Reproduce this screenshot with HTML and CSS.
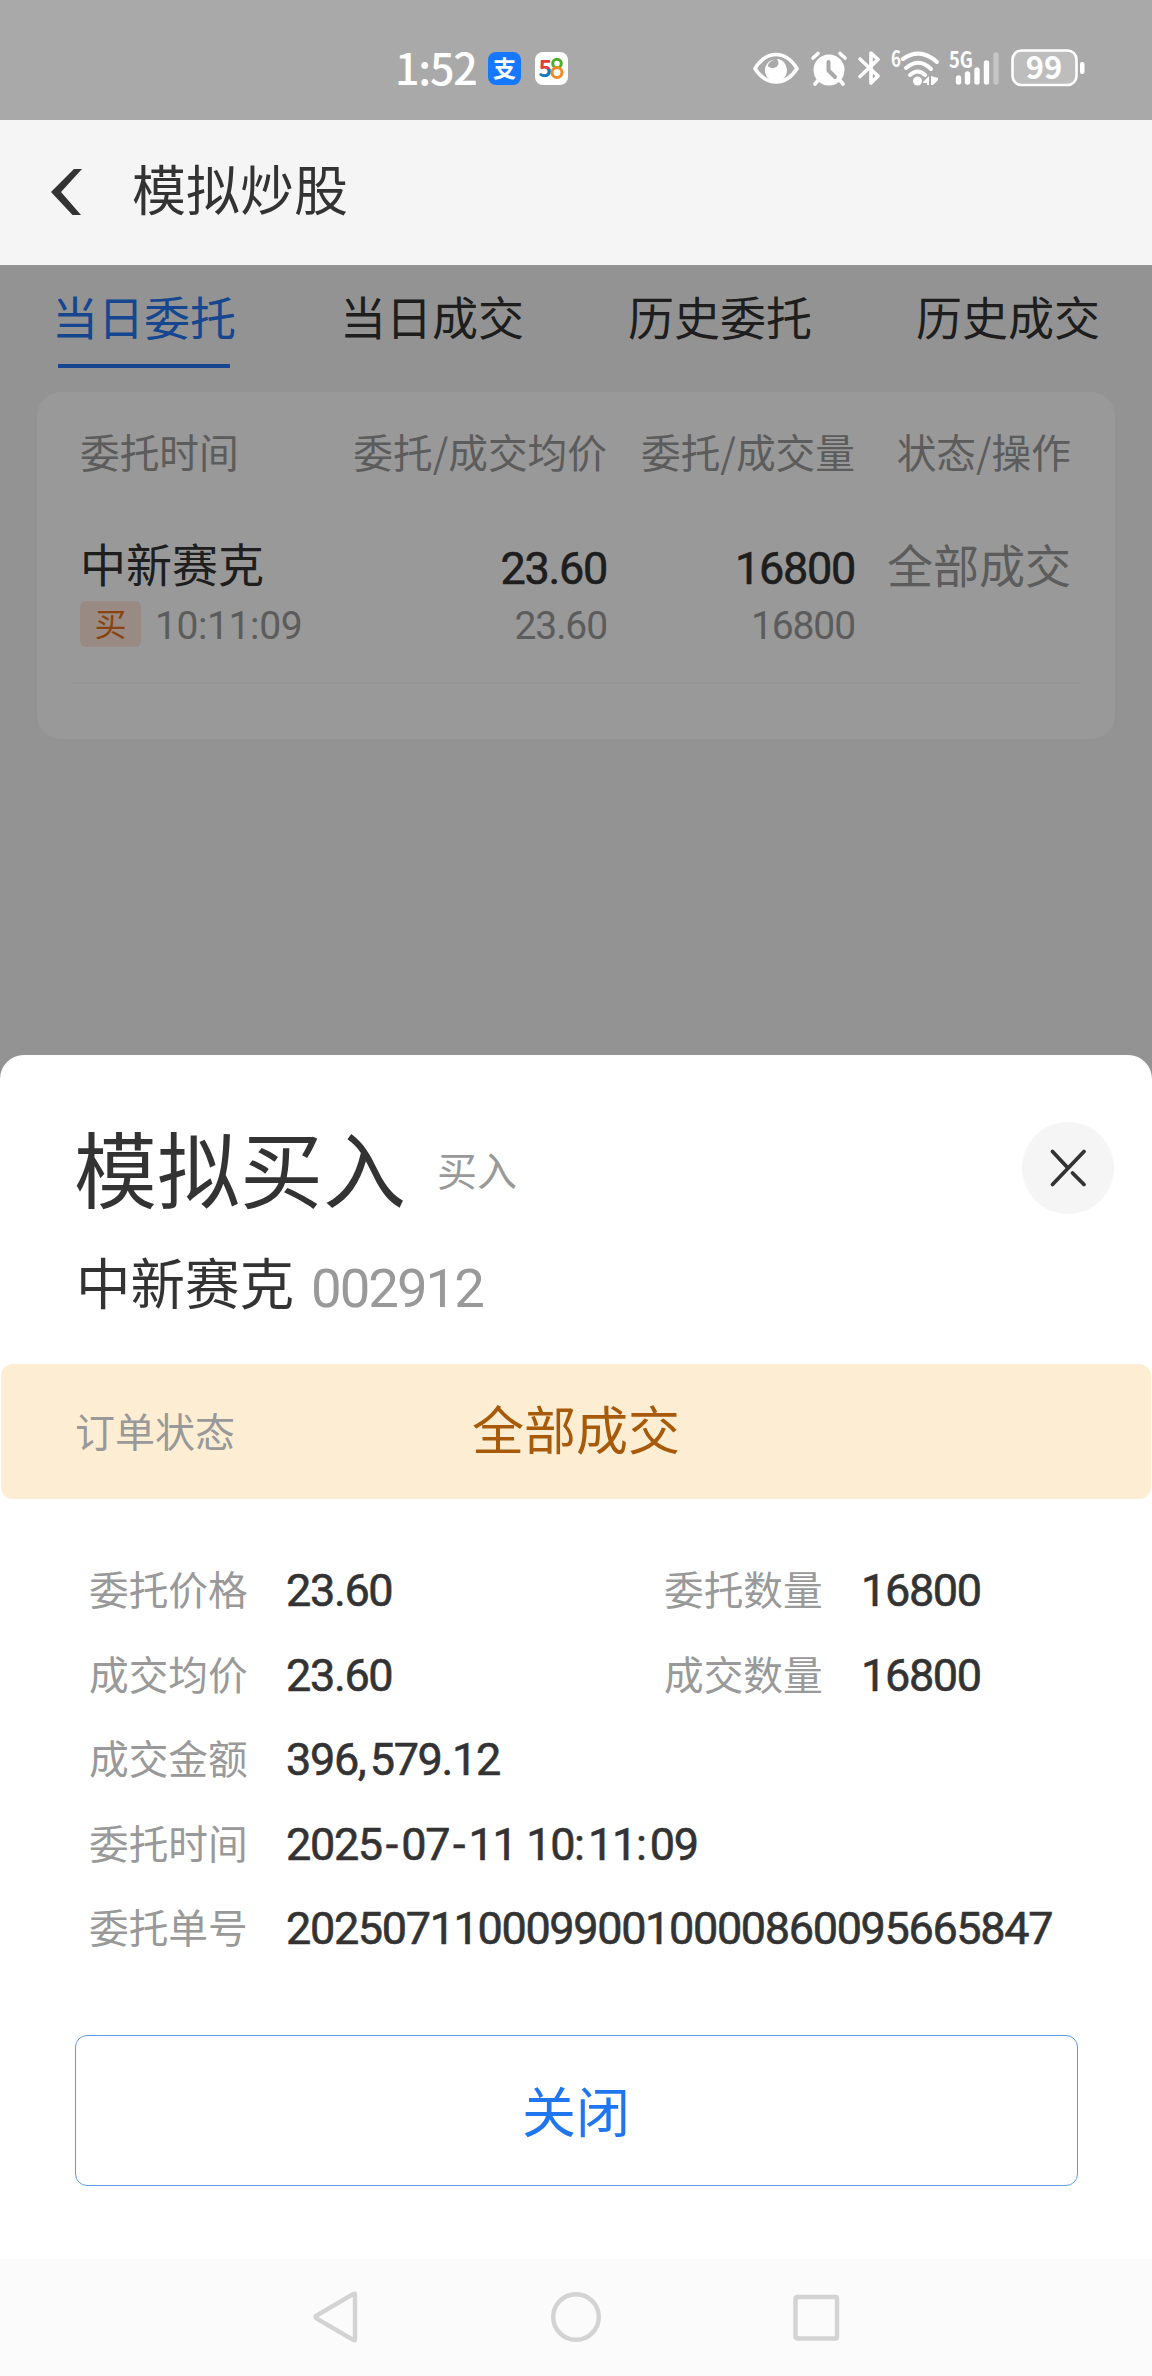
FILE: index.html
```html
<!DOCTYPE html>
<html lang="zh-CN">
  <head>
    <meta charset="UTF-8" />
    <meta name="viewport" content="width=device-width, initial-scale=1.0" />
    <title>模拟炒股</title>
    <link rel="stylesheet" href="styles.css">
  </head>
  <body>
    <div class="status-bar">
      <span class="time">1:52</span>
      <svg class="app-icon" width="33" height="33" viewBox="0 0 33 33">
        <rect width="33" height="33" rx="8" fill="#1677ff" />
        <text x="16.5" y="24.5" text-anchor="middle" font-size="23" font-weight="700" fill="#fff">支</text>
      </svg>
      <svg class="app-icon app-58" width="33" height="33" viewBox="0 0 33 33">
        <defs>
          <linearGradient id="five" x1="0" y1="0" x2="0" y2="1">
            <stop offset="0.55" stop-color="#e03c3c" />
            <stop offset="0.55" stop-color="#1779ba" />
          </linearGradient>
        </defs>
        <rect width="33" height="33" rx="8" fill="#fff" />
        <text x="3.500" y="25" font-size="23" font-weight="700" fill="url(#five)">5</text>
        <circle cx="22" cy="11.500" r="4.300" fill="none" stroke="#4bb02c" stroke-width="3" />
        <circle cx="22" cy="20.500" r="5" fill="none" stroke="#f08a24" stroke-width="3" />
      </svg>
      <div class="status-icons">
        <svg class="eye" width="46" height="33" viewBox="0 0 46 33">
          <path d="M2 16.5C8 7 15 2.500 23 2.500S38 7 44 16.500C38 26 31 30 23 30S8 26 2 16.500Z" fill="none" stroke="#fff" stroke-width="3.600" stroke-linejoin="round" />
          <path d="M22 7.500A11 11 0 1 0 33 14C31 9 28 7 24 7Q27 11 24 14.500Q19 18 14.500 14Q16 9 22 7.500Z" fill="#fff" />
        </svg>
        <svg class="alarm" width="36" height="35" viewBox="0 0 36 35">
          <circle cx="18" cy="19" r="15.500" fill="#fff" />
          <path d="M2 7L7 2.500M34 7L29 2.500M6.500 30L4 33M29.500 30L32 33" stroke="#fff" stroke-width="3.600" stroke-linecap="round" />
          <path d="M17.500 11V19.500L24 26" fill="none" stroke="#a9a9a9" stroke-width="4" stroke-linecap="round" stroke-linejoin="round" />
        </svg>
        <svg class="bluetooth" width="23" height="36" viewBox="0 0 23 36">
          <path d="M2 9L20 26L13 33V3L20 9.500L2 26.500" fill="none" stroke="#fff" stroke-width="3.600" stroke-linecap="round" stroke-linejoin="round" />
        </svg>
        <svg class="wifi" width="50" height="38" viewBox="0 0 50 38">
          <text x="0" y="18" font-size="22" font-weight="700" fill="#fff" textLength="10" lengthAdjust="spacingAndGlyphs">6</text>
          <path d="M12 10Q29 -2 46 13M15 19Q28 8 40 20M19 26Q27 19 34 26" fill="none" stroke="#fff" stroke-width="4" stroke-linecap="round" />
          <circle cx="26.500" cy="32" r="4.500" fill="#fff" />
          <path d="M32 33L38 27V36H36V34H32ZM40 27V36H42L47 31V29Z" fill="#fff" />
        </svg>
        <svg class="signal" width="52" height="38" viewBox="0 0 52 38">
          <text x="0" y="19" font-size="22" font-weight="700" fill="#fff" textLength="24" lengthAdjust="spacingAndGlyphs">5G</text>
          <path d="M9.500 29V33M18.500 25V33M28 21V33M37.500 14V33" stroke="#fff" stroke-width="5.400" stroke-linecap="round" />
          <path d="M47 6V33" stroke="#c5c5c5" stroke-width="5.400" stroke-linecap="round" />
        </svg>
        <svg class="battery" width="74" height="38" viewBox="0 0 74 38">
          <rect x="1.500" y="1.500" width="64" height="34.500" rx="9" fill="#bdbdbd" stroke="#fff" stroke-width="2.600" />
          <rect x="69" y="13" width="4.500" height="12" rx="2" fill="#fff" />
          <text x="33" y="30" text-anchor="middle" font-size="31" font-weight="700" fill="#fff">99</text>
        </svg>
      </div>
    </div>

    <div class="header">
      <svg width="34" height="48" viewBox="0 0 34 48">
        <path d="M24 0H32L11 23L31 46H22.500L1 23Z" fill="#333" />
      </svg>
      <h1>模拟炒股</h1>
    </div>

    <div class="content">
      <ul class="tabs">
        <li class="on">当日委托</li>
        <li>当日成交</li>
        <li>历史委托</li>
        <li>历史成交</li>
      </ul>
      <div class="card">
        <div class="row head">
          <span>委托时间</span>
          <span>委托/成交均价</span>
          <span>委托/成交量</span>
          <span>状态/操作</span>
        </div>
        <div class="row order">
          <div>
            <p class="name">中新赛克</p>
            <p class="deal"><span class="tag">买</span><span class="num clock">10:11:09</span></p>
          </div>
          <div class="num">
            <p class="main">23.60</p>
            <p class="sub">23.60</p>
          </div>
          <div class="num">
            <p class="main">16800</p>
            <p class="sub">16800</p>
          </div>
          <div class="state">全部成交</div>
        </div>
      </div>

      <div class="mask">
        <div class="sheet">
          <div class="sheet-top">
            <h2>模拟买入</h2>
            <span class="side">买入</span>
            <button class="close">
              <svg width="40" height="40" viewBox="0 0 40 40">
                <path d="M4.500 3.500L19 19M24.500 25L36 36.500M36 3.500L4.500 36.500" stroke="#333" stroke-width="3.800" stroke-linecap="round" />
              </svg>
            </button>
          </div>
          <div class="stock">
            <span>中新赛克</span>
            <span class="num code">002912</span>
          </div>
          <div class="banner">
            <span class="label">订单状态</span>
            <span class="result">全部成交</span>
          </div>
          <dl class="details">
            <dt>委托价格</dt>
            <dd class="num">23.60</dd>
            <dt>委托数量</dt>
            <dd class="num">16800</dd>
            <dt>成交均价</dt>
            <dd class="num">23.60</dd>
            <dt>成交数量</dt>
            <dd class="num">16800</dd>
            <dt>成交金额</dt>
            <dd class="num wide">396<b>,</b>579.12</dd>
            <dt>委托时间</dt>
            <dd class="num wide">2025<i>-</i>07<i>-</i>11 10<b>:</b>11<b>:</b>09</dd>
            <dt>委托单号</dt>
            <dd class="num wide">20250711000990010000860095665847</dd>
          </dl>
          <button class="confirm">关闭</button>
        </div>
      </div>
    </div>

    <div class="nav">
      <svg width="50" height="54" viewBox="0 0 50 54">
        <path d="M45 3.500V48.500Q45 50 43.500 49L6.500 27.500Q4.500 26 6.500 24.500L43.500 3Q45 2 45 3.500Z" />
      </svg>
      <svg width="54" height="54" viewBox="0 0 54 54">
        <circle cx="27" cy="26" r="22.800" />
      </svg>
      <svg width="50" height="54" viewBox="0 0 50 54">
        <rect x="3.500" y="6" width="41.500" height="41.500" rx="1.500" />
      </svg>
    </div>
  </body>
</html>
```
FILE: styles.css
```css
* {
  margin: 0;
  padding: 0;
  box-sizing: border-box;
}
body {
  width: 1152px;
  height: 2376px;
  background: #fff;
  color: #333;
  font-family: "Noto Sans CJK SC", sans-serif;
  overflow: hidden;
}
ul {
  list-style: none;
}
button {
  border: none;
  font-family: inherit;
}
svg {
  display: block;
  flex-shrink: 0;
  overflow: visible;
}
.num {
  font-family: Roboto, "Noto Sans CJK SC", sans-serif;
}

/* status bar */
.status-bar {
  display: flex;
  align-items: center;
  height: 120px;
  padding: 16px 67px 0 395px;
  background: #a9a9a9;
}
.time {
  width: 93px;
  color: #fff;
  font-size: 43px;
  font-weight: 500;
  line-height: 60px;
  padding-bottom: 4px;
  letter-spacing: -1.2px;
}
.app-58 {
  margin-left: 14px;
}
.status-icons {
  display: flex;
  align-items: center;
  margin-left: auto;
}
.alarm {
  margin-left: 12px;
}
.bluetooth {
  margin-left: 11px;
}
.wifi {
  margin-left: 10px;
}
.signal {
  margin-left: 8px;
}
.battery {
  margin-left: 10px;
}

/* header */
.header {
  display: flex;
  align-items: center;
  height: 145px;
  padding-left: 50px;
  background: #f5f5f5;
}
.header h1 {
  margin-left: 48px;
  padding-bottom: 9px;
  font-size: 54px;
  font-weight: 400;
  line-height: 80px;
}

/* order list */
.content {
  position: relative;
  height: 1994px;
  background: #f5f5f5;
}
.tabs {
  display: flex;
  height: 127px;
}
.tabs li {
  display: flex;
  flex-direction: column;
  align-items: center;
  width: 288px;
  padding-top: 20px;
  font-size: 46px;
  line-height: 60px;
}
.tabs li.on {
  color: #2376ee;
}
.tabs li.on::after {
  content: "";
  width: 172px;
  height: 4px;
  margin-top: 19px;
  background: #2376ee;
}
.card {
  height: 347px;
  margin: 0 37px;
  padding: 0 36px;
  border-radius: 24px;
  background: #fff;
}
.row {
  display: grid;
  grid-template-columns: 240px 287px 248px 1fr;
  padding: 0 8px 0 7px;
  text-align: right;
}
.row > :first-child {
  text-align: left;
}
.head {
  height: 140px;
  font-size: 39.7px;
  line-height: 118px;
  color: #999;
}
.order {
  height: 152px;
  border-bottom: 2px solid #f8f8f8;
}
.name {
  height: 67px;
  font-size: 46px;
  line-height: 60px;
}
.deal {
  display: flex;
  align-items: center;
}
.tag {
  width: 61px;
  height: 46px;
  border-radius: 6px;
  background: #ffe8dd;
  color: #e6701c;
  font-size: 32px;
  line-height: 42px;
  text-align: center;
}
.clock {
  margin-left: 14px;
  padding-top: 4px;
  color: #999;
  font-size: 39px;
  line-height: 46px;
  letter-spacing: -0.4px;
}
.main {
  margin-top: 9px;
  font-size: 45px;
  line-height: 56px;
  letter-spacing: -1.3px;
  -webkit-text-stroke: 0.6px;
}
.sub {
  color: #999;
  font-size: 39px;
  line-height: 58px;
  letter-spacing: -1.1px;
}
.state {
  color: #999;
  font-size: 46px;
  line-height: 63px;
}

/* bottom sheet over the list */
.mask {
  position: absolute;
  inset: 0;
  display: flex;
  flex-direction: column;
  justify-content: flex-end;
  background: rgba(0, 0, 0, 0.4);
}
.sheet {
  height: 1204px;
  border-radius: 24px 24px 0 0;
  background: #fff;
}
.sheet-top {
  display: flex;
  align-items: center;
  height: 180px;
  padding: 46px 38px 0 74px;
}
.sheet-top h2 {
  font-size: 83px;
  font-weight: 400;
  line-height: 100px;
  padding-bottom: 4px;
}
.side {
  margin-left: 31px;
  padding-top: 2px;
  color: #999;
  font-size: 40px;
  line-height: 60px;
}
.close {
  display: flex;
  align-items: center;
  justify-content: center;
  width: 92px;
  height: 92px;
  margin-left: auto;
  border-radius: 50%;
  background: #f5f5f5;
}
.stock {
  display: flex;
  align-items: center;
  height: 129px;
  padding: 0 0 37px 76px;
  font-size: 54.5px;
  line-height: 80px;
}
.code {
  margin-left: 17px;
  padding-top: 13px;
  color: #999;
  font-size: 54.5px;
  letter-spacing: -2px;
}
.banner {
  display: grid;
  grid-template-columns: 1fr auto 1fr;
  align-items: center;
  height: 135px;
  margin: 0 1px;
  padding: 0 74px;
  border-radius: 12px;
  background: #fdeed3;
}
.banner .label {
  padding-bottom: 4px;
  color: #999;
  font-size: 40px;
}
.result {
  padding-bottom: 8px;
  color: #a65a0a;
  font-size: 52px;
  line-height: 80px;
}
.details {
  display: grid;
  grid-template-columns: 197px 378px 197px 1fr;
  grid-auto-rows: 84.5px;
  padding: 48px 0 0 89px;
}
.details dt {
  color: #999;
  font-size: 39.7px;
  line-height: 82px;
}
.details dd {
  font-size: 45px;
  line-height: 88px;
  letter-spacing: -1.35px;
  white-space: nowrap;
  -webkit-text-stroke: 0.6px;
}
.details .wide {
  grid-column: 2 / -1;
}
.details i {
  font-style: normal;
  letter-spacing: 3px;
  padding-left: 4px;
}
.details b {
  font-weight: 400;
  letter-spacing: 3px;
}
.confirm {
  display: block;
  width: 1003px;
  height: 151px;
  margin: 65px auto 0;
  padding-bottom: 2px;
  border: 1px solid #5b9bea;
  border-radius: 12px;
  background: #fff;
  color: #1f76ee;
  font-size: 54px;
}

/* system keys */
.nav {
  display: flex;
  justify-content: center;
  align-items: center;
  gap: 189px;
  height: 117px;
  background: #fbfbfb;
}
.nav svg {
  fill: none;
  stroke: #d3d3d3;
  stroke-width: 4.4px;
}
```
